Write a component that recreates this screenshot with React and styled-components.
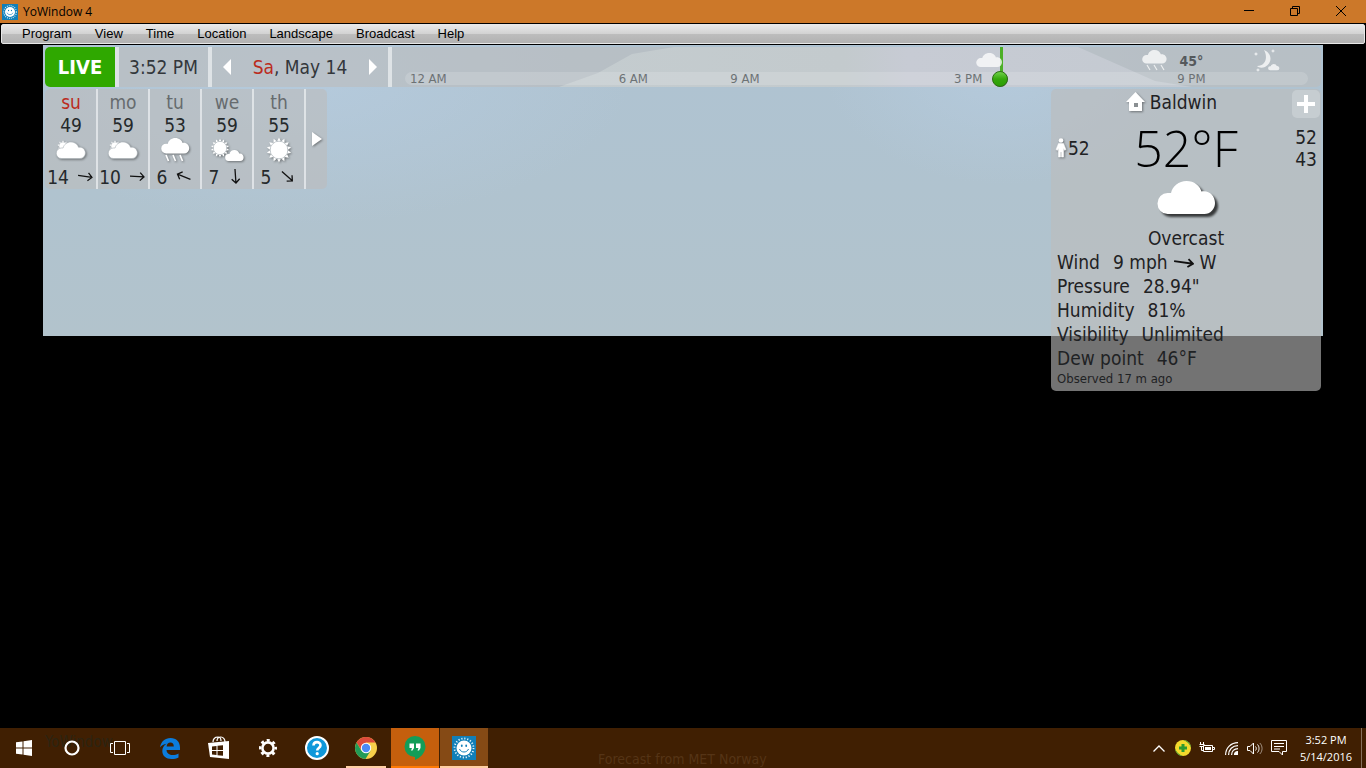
import React from "react";
import styled, { createGlobalStyle } from "styled-components";

const Global = createGlobalStyle`
  *, *::before, *::after { box-sizing: border-box; }
  body { margin: 0; background: #000; font-family: "DejaVu Sans Condensed", "DejaVu Sans", sans-serif; }
  button { font: inherit; color: inherit; background: none; border: 0; padding: 0; margin: 0; cursor: pointer; }
  svg { display: block; flex: none; }
  h1, p, dl, dd { margin: 0; font-weight: 400; }
`;

const uiFont = `"Open Sans", "Noto Sans", sans-serif`;
const glass = "rgba(188, 188, 188, 0.61)";
const divider = "rgba(235, 238, 240, 0.75)";

const Desktop = styled.div`
  display: flex;
  flex-direction: column;
  min-height: 100vh;
  background: #000;
`;

const TitleBar = styled.header`
  display: flex;
  align-items: center;
  height: 23px;
  padding: 0 2px;
  background: #cc7829;
  color: #000;
  font-family: ${uiFont};
`;

const Title = styled.h1`
  flex: 1;
  margin-left: 5px;
  font-size: 12px;
  line-height: 22px;
`;

const CaptionButton = styled.button`
  display: flex;
  align-items: center;
  justify-content: center;
  width: 46px;
  height: 21px;
  align-self: flex-start;
`;

const MenuBar = styled.nav`
  display: flex;
  align-items: center;
  gap: 23px;
  height: 20px;
  margin: 1px 1px 1px;
  padding: 0 20px 2px;
  border: 1px solid #e8e8e8;
  border-radius: 2px;
  background: linear-gradient(#e8e8e8, #d2d2d2 50%, #bdbdbd 51%, #b2b2b2);
  color: #000;
  font-family: "Liberation Sans", Arial, sans-serif;
  font-size: 13px;
`;

const Stage = styled.main`
  flex: 1;
  margin: 0 43px;
  padding: 2px 2px 40px;
  background:
    radial-gradient(ellipse 330px 150px at 260px 30px, rgba(183, 205, 225, 0.7), rgba(183, 205, 225, 0) 100%) 0 0 / 100% 291px no-repeat,
    radial-gradient(ellipse 180px 120px at 960px 20px, rgba(183, 205, 225, 0.7), rgba(183, 205, 225, 0) 100%) 0 0 / 100% 291px no-repeat,
    linear-gradient(#afc3d2, #b0c3cf 50%, #b2c3cc) 0 0 / 100% 291px no-repeat;
`;

const TopBar = styled.div`
  display: flex;
  height: 40px;
  border-radius: 5px;
  overflow: hidden;
  background: ${glass};
  color: #33373b;
  font-size: 19px;
`;

const LiveButton = styled.button`
  width: 70px;
  background: #2fa800;
  color: #fff;
  font-weight: 700;
  font-size: 20px;
`;

const TopCell = styled.div`
  display: flex;
  align-items: center;
  justify-content: ${(p) => (p.$spread ? "space-between" : "center")};
  width: ${(p) => p.$width}px;
  padding: ${(p) => (p.$spread ? "0 10px" : "0")};
  border-left: 4px solid ${divider};
`;

const Weekend = styled.span`
  color: #bb2c1e;
`;

const Timeline = styled.div`
  position: relative;
  flex: 1;
  border-left: 4px solid ${divider};
`;

const Daylight = styled.svg`
  position: absolute;
  inset: 0;
  width: 100%;
  height: 100%;
`;

const Track = styled.div`
  position: absolute;
  left: 13px;
  right: 13px;
  bottom: 2px;
  height: 13px;
  border-radius: 7px;
  background: rgba(255, 255, 255, 0.15);
`;

const Hours = styled.div`
  position: absolute;
  inset: 0 18px;
`;

const Mark = styled.div`
  position: absolute;
  top: ${(p) => p.$top}px;
  transform: ${(p) => (p.$start ? "none" : "translateX(-50%)")};
  color: ${(p) => (p.$strong ? "#55595c" : "#6d7275")};
  font-size: ${(p) => (p.$strong ? 14 : 13)}px;
  font-weight: ${(p) => (p.$strong ? 700 : 400)};
  line-height: 16px;
  white-space: nowrap;
`;

const Body = styled.div`
  display: flex;
  justify-content: space-between;
  align-items: flex-start;
  padding-top: 2px;
`;

const Forecast = styled.section`
  display: flex;
  height: 100px;
  padding-left: 1px;
  border-radius: 5px;
  background: ${glass};
  color: #25292b;
`;

const Day = styled.div`
  display: grid;
  grid-template-rows: 25px 22px 28px 25px;
  justify-items: center;
  align-items: center;
  width: 52px;
  border-right: 2px solid ${divider};
  font-size: 19px;
  line-height: 22px;
`;

const DayName = styled.span`
  color: ${(p) => (p.$weekend ? "#bb2c1e" : "#666b6e")};
`;

const WindLine = styled.span`
  display: flex;
  align-items: center;
  gap: 9px;
  padding-right: 2px;
`;

const NextButton = styled.button`
  display: flex;
  align-items: center;
  justify-content: center;
  width: 21px;
`;

const Shadowed = styled.svg`
  filter: drop-shadow(${(p) => p.$depth || 1}px ${(p) => p.$depth || 1}px 1px rgba(0, 0, 0, ${(p) => (p.$depth ? 0.7 : 0.4)}));
`;

const Details = styled.section`
  width: 270px;
  padding-bottom: 4px;
  border-radius: 5px;
  background: ${glass};
  color: #1f2224;
  font-size: 19px;
  line-height: 24px;
`;

const PlaceRow = styled.div`
  display: grid;
  grid-template-columns: 1fr 29px;
  height: 30px;
`;

const Place = styled.div`
  display: flex;
  justify-content: center;
  gap: 5px;
  padding-top: 1px;
`;

const AddButton = styled.button`
  display: flex;
  align-items: center;
  justify-content: center;
  width: 28px;
  height: 28px;
  margin-top: 1px;
  border-radius: 5px;
  background: rgba(255, 255, 255, 0.22);
`;

const TempRow = styled.div`
  display: grid;
  grid-template-columns: 60px 1fr 60px;
  align-items: center;
  height: 58px;
  padding: 0 4px;
`;

const FeelsLike = styled.div`
  display: flex;
  align-items: center;
`;

const Temperature = styled.div`
  color: #000;
  font-family: ${uiFont};
  font-size: 50px;
  font-weight: 300;
  line-height: 58px;
  text-align: center;
`;

const Range = styled.div`
  line-height: 22px;
  text-align: right;
`;

const Condition = styled.div`
  display: flex;
  flex-direction: column;
  align-items: center;
  gap: 12px;
  padding-top: 4px;
`;

const Readings = styled.dl`
  padding-left: 6px;
`;

const Reading = styled.div`
  display: flex;
  gap: 13px;
  dd { display: flex; align-items: center; gap: 6px; }
`;

const Observed = styled.p`
  padding-left: 6px;
  font-size: 13px;
  line-height: 17px;
`;

const TaskBar = styled.footer`
  position: relative;
  display: flex;
  height: 40px;
  background: #401f02;
  color: #fff;
`;

const Ghost = styled.span`
  position: absolute;
  top: ${(p) => p.$top}px;
  left: ${(p) => p.$left};
  color: ${(p) => p.$color};
  font-size: ${(p) => p.$size}px;
  line-height: 18px;
  white-space: nowrap;
  pointer-events: none;
`;

const Tasks = styled.div`
  display: flex;
  gap: ${(p) => p.$gap || 0}px;
  margin-right: 2px;
`;

const edge = { open: "#ffcfa3", alert: "#ff7a05", active: "#ffcfa3" };
const fill = { alert: "#c55f0d", active: "#854a15" };

const Task = styled.button`
  position: relative;
  display: flex;
  align-items: center;
  justify-content: center;
  width: 48px;
  height: 40px;
  background: ${(p) => fill[p.$state] || "transparent"};
  &::after {
    content: "";
    position: absolute;
    bottom: 0;
    left: ${(p) => (p.$state === "open" ? 4 : 0)}px;
    right: ${(p) => (p.$state === "open" ? 4 : 0)}px;
    height: 2px;
    background: ${(p) => edge[p.$state] || "transparent"};
  }
`;

const Tray = styled.div`
  display: flex;
  align-items: center;
  margin-left: auto;
  padding-right: 4px;
`;

const TrayButton = styled.button`
  display: flex;
  align-items: center;
  justify-content: center;
  width: 24px;
  height: 40px;
`;

const Clock = styled.button`
  width: 71px;
  height: 40px;
  border-right: 1px solid #85705c;
  font-family: ${uiFont};
  font-size: 11px;
  line-height: 17px;
  text-align: center;
`;

const CLOUD = "M11 33a10.500 10.500 0 0 1 0-21h3.500C16 5 22.500 0 30.500 0S44.500 5 46 10.500C54 9 60 15 60 22a11 11 0 0 1-11 11z";

function Cloud({ width, height, depth }) {
  return (
    <Shadowed $depth={depth} width={width} height={height} viewBox="0 0 60 33" preserveAspectRatio="none">
      <path d={CLOUD} fill="#fff" />
    </Shadowed>
  );
}

function SunShape({ cx, cy, r, spikes = 16 }) {
  const pts = [];
  for (let i = 0; i < spikes * 2; i++) {
    const a = (Math.PI * i) / spikes;
    const d = i % 2 ? r * 1.1 : r * 1.55;
    pts.push(`${cx + d * Math.sin(a)},${cy - d * Math.cos(a)}`);
  }
  return (
    <g>
      <polygon points={pts.join(" ")} fill="#fff" />
      <circle cx={cx} cy={cy} r={r * 1.1} fill="none" stroke="#a9b1b7" strokeWidth="0.7" />
      <circle cx={cx} cy={cy} r={r} fill="#fff" />
    </g>
  );
}

function WeatherIcon({ kind }) {
  if (kind === "mostly")
    return (
      <Shadowed width="30" height="20" viewBox="0 0 30 20">
        <SunShape cx={7} cy={6} r={3.6} spikes={9} />
        <path d={CLOUD} transform="translate(0 2) scale(.49 .5)" fill="#fff" stroke="#a9b1b7" strokeWidth="1.200" />
      </Shadowed>
    );
  if (kind === "rain")
    return (
      <Shadowed width="30" height="24" viewBox="0 0 30 24">
        <path d={CLOUD} transform="translate(1 0) scale(.47 .47)" fill="#fff" />
        <path d="M6 17l2.500 6M13 17l2.500 6M20 17l2.500 6" stroke="#fff" strokeWidth="1.600" />
      </Shadowed>
    );
  if (kind === "partly")
    return (
      <Shadowed width="34" height="24" viewBox="0 0 34 24">
        <SunShape cx={10} cy={10} r={6} spikes={14} />
        <path d={CLOUD} transform="translate(15 12) scale(.31 .33)" fill="#fff" />
      </Shadowed>
    );
  return (
    <Shadowed width="26" height="26" viewBox="0 0 26 26">
      <SunShape cx={13} cy={13} r={8} spikes={14} />
    </Shadowed>
  );
}

function WindArrow({ angle, large }) {
  return (
    <svg width={large ? 20 : 15} height="15" viewBox={large ? "0 0 20 15" : "0 0 15 15"}>
      <path
        d={large ? "M0 7.500H19M14 3.500l5 4-5 4" : "M0 7.500H14M10 3.500l4 4-4 4"}
        transform={large ? `rotate(${angle} 10 7.500)` : `rotate(${angle} 7.500 7.500)`}
        fill="none"
        stroke="#111"
        strokeWidth={large ? 1.8 : 1.3}
      />
    </svg>
  );
}

function Triangle({ left }) {
  return (
    <svg width="11" height="16" viewBox="0 0 11 16">
      <path d={left ? "M9 0v16L1 8z" : "M2 0v16l8-8z"} fill="#fff" />
    </svg>
  );
}

function AppIcon({ size }) {
  return (
    <svg width={size} height={size} viewBox="0 0 24 24">
      <rect width="24" height="24" fill="#117fb8" />
      <circle cx="12" cy="12" r="9.500" fill="none" stroke="#e4f3fb" strokeWidth="1.800" strokeDasharray="1.200 1.784" />
      <circle cx="12" cy="12" r="7.500" fill="#fff" />
      <ellipse cx="9.800" cy="9.800" rx="0.900" ry="1.200" fill="#117fb8" />
      <ellipse cx="14.200" cy="9.800" rx="0.900" ry="1.200" fill="#117fb8" />
      <path d="M7.500 13c1.500 4 7.500 4 9 0" fill="none" stroke="#117fb8" strokeWidth="1" />
    </svg>
  );
}

const menus = ["Program", "View", "Time", "Location", "Landscape", "Broadcast", "Help"];

const days = [
  { name: "su", temp: 49, icon: "mostly", wind: 14, angle: 8, weekend: true },
  { name: "mo", temp: 59, icon: "mostly", wind: 10, angle: 3 },
  { name: "tu", temp: 53, icon: "rain", wind: 6, angle: 202 },
  { name: "we", temp: 59, icon: "partly", wind: 7, angle: 86 },
  { name: "th", temp: 55, icon: "sun", wind: 5, angle: 42 },
];

const hourLabels = [
  { hour: 0, text: "12 AM" },
  { hour: 6, text: "6 AM" },
  { hour: 9, text: "9 AM" },
  { hour: 15, text: "3 PM" },
  { hour: 21, text: "9 PM" },
];

const at = (hour) => ({ left: `${(hour / 24) * 100}%` });

const readings = [
  ["Pressure", '28.94"'],
  ["Humidity", "81%"],
  ["Visibility", "Unlimited"],
  ["Dew point", "46°F"],
];

function TimelineStrip() {
  return (
    <Timeline>
      <Daylight viewBox="0 0 929 40" preserveAspectRatio="none">
        <defs>
          <linearGradient id="day" x1="0" x2="1" y1="0" y2="0">
            <stop offset="0" stopColor="#c4cccf" />
            <stop offset="0.45" stopColor="#c3cacd" />
            <stop offset="0.55" stopColor="#c7cbd4" />
            <stop offset="1" stopColor="#c4cad1" />
          </linearGradient>
        </defs>
        <path d="M167 40L206 26L240 7L282 0H686L763 34L800 40z" fill="url(#day)" />
      </Daylight>
      <Track />
      <Hours>
        {hourLabels.map((l) => (
          <Mark key={l.text} $top={24} $start={l.hour === 0} style={at(l.hour)}>{l.text}</Mark>
        ))}
        <Mark $top={0} style={at(15.87)}>
          <svg width="18" height="40" viewBox="0 0 18 40">
            <defs>
              <linearGradient id="knob" x1="0" x2="0" y1="0" y2="1">
                <stop offset="0" stopColor="#74d44e" />
                <stop offset="0.5" stopColor="#35a80c" />
                <stop offset="1" stopColor="#2c9c04" />
              </linearGradient>
            </defs>
            <path d="M9 0h3v26H9z" fill="#4caf26" />
            <circle cx="9.500" cy="32.500" r="7.500" fill="rgba(0,0,0,.35)" />
            <circle cx="9" cy="32" r="7.500" fill="url(#knob)" stroke="#2c6e14" />
          </svg>
        </Mark>
        <Mark $top={6} style={at(15.55)}>
          <svg width="26" height="14" viewBox="0 0 60 33" preserveAspectRatio="none">
            <path d={CLOUD} fill="#fff" opacity=".75" />
          </svg>
        </Mark>
        <Mark $top={3} style={at(20)}>
          <svg width="26" height="22" viewBox="0 0 26 22" opacity=".75">
            <path d={CLOUD} transform="translate(1 0) scale(.41 .41)" fill="#fff" />
            <path d="M6 15l3 5M13 15l3 5M20 15l3 5" stroke="#fff" strokeWidth="1.200" />
          </svg>
        </Mark>
        <Mark $strong $top={6} style={at(21)}>45°</Mark>
        <Mark $top={2} style={at(23.02)}>
          <svg width="26" height="24" viewBox="0 0 26 24" fill="#fff" opacity=".75">
            <path d="M10 1c8 3 9 13 1 17-3 1-6 1-8-1 9 0 11-9 7-16z" />
            <path d={CLOUD} transform="translate(14 15) scale(.19 .19)" />
            <path d="M2 3l.7 1.300 1.300.7-1.300.7L2 7l-.7-1.300L0 5l1.300-.7zM19 0l.6 1.200 1.400.8-1.400.7L19 4l-.6-1.300L17 2l1.400-.8zM4 19l.6 1.200 1.400.8-1.400.7L4 23l-.6-1.300L2 21l1.400-.8z" />
          </svg>
        </Mark>
      </Hours>
    </Timeline>
  );
}

export default function App() {
  return (
    <Desktop>
      <Global />
      <TitleBar>
        <AppIcon size={16} />
        <Title>YoWindow 4</Title>
        <CaptionButton aria-label="Minimize">
          <svg width="10" height="10" viewBox="0 0 10 10"><path d="M0 4.500h10" stroke="#000" /></svg>
        </CaptionButton>
        <CaptionButton aria-label="Restore">
          <svg width="10" height="10" viewBox="0 0 10 10"><path d="M.5 2.500h7v7h-7zM2.500 2V.5h7v7H8" fill="none" stroke="#000" /></svg>
        </CaptionButton>
        <CaptionButton aria-label="Close">
          <svg width="10" height="10" viewBox="0 0 10 10"><path d="M0 0l10 10M10 0L0 10" stroke="#000" /></svg>
        </CaptionButton>
      </TitleBar>
      <MenuBar>
        {menus.map((m) => <button key={m}>{m}</button>)}
      </MenuBar>

      <Stage>
        <TopBar>
          <LiveButton>LIVE</LiveButton>
          <TopCell $width={93}>3:52 PM</TopCell>
          <TopCell $width={180} $spread>
            <button aria-label="Previous day"><Triangle left /></button>
            <span><Weekend>Sa</Weekend>, May 14</span>
            <button aria-label="Next day"><Triangle /></button>
          </TopCell>
          <TimelineStrip />
        </TopBar>

        <Body>
          <Forecast>
            {days.map((d) => (
              <Day key={d.name}>
                <DayName $weekend={d.weekend}>{d.name}</DayName>
                <span>{d.temp}</span>
                <WeatherIcon kind={d.icon} />
                <WindLine>{d.wind}<WindArrow angle={d.angle} /></WindLine>
              </Day>
            ))}
            <NextButton aria-label="More days">
              <Shadowed width="12" height="15" viewBox="0 0 12 15"><path d="M1 0v14l10-7z" fill="#fff" /></Shadowed>
            </NextButton>
          </Forecast>

          <Details>
            <PlaceRow>
              <Place>
                <Shadowed width="19" height="22" viewBox="0 0 19 22">
                  <path d="M9.500 2L19 12h-3v9H3v-9H0z" fill="#fff" />
                  <path d="M8 13h4v4H8z" fill="#8a8f92" />
                </Shadowed>
                Baldwin
              </Place>
              <AddButton aria-label="Add location">
                <svg width="20" height="20" viewBox="0 0 20 20"><path d="M10 1v18M1 10h18" stroke="#fff" strokeWidth="4" /></svg>
              </AddButton>
            </PlaceRow>
            <TempRow>
              <FeelsLike>
                <Shadowed width="13" height="20" viewBox="0 0 13 20">
                  <circle cx="6" cy="2.500" r="2.300" fill="#fff" />
                  <path d="M3.500 5.500h5l2.500 6-1.500.8L8.500 10v9H6.500v-5h-1v5h-2v-9l-1 2.300L1 11.500z" fill="#fff" stroke="#fff" strokeWidth="0.500" />
                </Shadowed>
                52
              </FeelsLike>
              <Temperature>52°F</Temperature>
              <Range>52<br />43</Range>
            </TempRow>
            <Condition>
              <Cloud width={58} height={33} depth={3} />
              <span>Overcast</span>
            </Condition>
            <Readings>
              <Reading>
                <dt>Wind</dt>
                <dd>9 mph<WindArrow angle={8} large />W</dd>
              </Reading>
              {readings.map(([k, v]) => (
                <Reading key={k}><dt>{k}</dt><dd>{v}</dd></Reading>
              ))}
            </Readings>
            <Observed>Observed 17 m ago</Observed>
          </Details>
        </Body>
      </Stage>

      <TaskBar>
        <Ghost $size={15} $top={5} $left="45px" $color="#2c2412">YoWindow</Ghost>
        <Ghost $size={14} $top={22} $left="calc(50% - 85px)" $color="#553416">Forecast from MET Norway</Ghost>
        <Tasks>
          <Task aria-label="Start">
            <svg width="16" height="16" viewBox="0 0 16 16" fill="#fff"><path d="M0 2.300L6.500 1.400v6.100H0zM7.500 1.200L16 0v7.500H7.500zM0 8.500h6.500v6.100L0 13.700zM7.500 8.500H16V16l-8.500-1.200z" /></svg>
          </Task>
          <Task aria-label="Cortana">
            <svg width="16" height="16" viewBox="0 0 16 16"><circle cx="8" cy="8" r="6.500" fill="none" stroke="#fff" strokeWidth="2.200" /></svg>
          </Task>
          <Task aria-label="Task view">
            <svg width="20" height="14" viewBox="0 0 20 14" fill="none" stroke="#fff"><path d="M4.500.5h11v13h-11zM3 2.500H.5v9H3M17 2.500h2.500v9H17" /></svg>
          </Task>
        </Tasks>
        <Tasks $gap={1}>
          <Task aria-label="Edge">
            <svg width="20" height="21" viewBox="0 0 20 21"><path d="M0 9.500C1 3.500 5 0 10.500 0 16.500 0 20 4 20 9.500V12H6.500c.2 3.500 3 5 6 5 2.300 0 4.300-.6 6-1.600v4c-2 1.100-4.300 1.600-7 1.600C6 21 2.300 17.800 2.300 13c0-3.200 1.700-5.800 4.300-7.300C3.700 6 1.600 7.300 0 9.500zM6.600 8.500h7.200c0-2.400-1.200-3.900-3.400-3.900-2.100 0-3.500 1.500-3.800 3.900z" fill="#0c7cdb" /></svg>
          </Task>
          <Task aria-label="Store">
            <svg width="22" height="24" viewBox="0 0 22 24"><path d="M5 6C5 2 8 1 10 1s3 2 3 4M9 5c0-3 2-4 4-4s4 2 4 5" fill="none" stroke="#fff" strokeWidth="1.200" /><path d="M0 7l21-2v18L2 21z" fill="#fff" /><path d="M4 10.500l4.500-.5v4H4zM9.500 9.800l5.500-.6V14H9.500zM4 15h4.500v4L4 18.500zM9.500 15H15v4.800l-5.500-.6z" fill="#401f02" /></svg>
          </Task>
          <Task aria-label="Settings">
            <svg width="20" height="20" viewBox="0 0 20 20"><circle cx="10" cy="10" r="5.600" fill="none" stroke="#fff" strokeWidth="2.600" /><circle cx="10" cy="10" r="7.800" fill="none" stroke="#fff" strokeWidth="2.400" strokeDasharray="3.063 3.063" strokeDashoffset="1.530" /></svg>
          </Task>
          <Task aria-label="Help">
            <svg width="24" height="24" viewBox="0 0 24 24"><circle cx="12" cy="12" r="11" fill="#0f98da" stroke="#fff" strokeWidth="2" /><path d="M8.500 9.500C8.500 5 15.500 5 15.500 9.300c0 2.700-3.300 2.700-3.300 5.200" fill="none" stroke="#fff" strokeWidth="2.600" /><circle cx="12.200" cy="17.700" r="1.600" fill="#fff" /></svg>
          </Task>
          <Task $state="open" aria-label="Chrome">
            <svg width="22" height="22" viewBox="0 0 22 22"><circle cx="11" cy="11" r="11" fill="#f9d04a" /><path d="M1.500 5.500A11 11 0 0 1 20.500 5.500H11L6.500 13.500z" fill="#db4a3b" /><path d="M1.500 5.500A11 11 0 0 0 10.500 22L15.700 13.500 11 16 6.300 13.600z" fill="#229b57" /><circle cx="11" cy="11" r="5.200" fill="#fff" /><circle cx="11" cy="11" r="4.200" fill="#4a8af4" /></svg>
          </Task>
          <Task $state="alert" aria-label="Hangouts">
            <svg width="22" height="24" viewBox="0 0 22 24"><path d="M11 0a10.500 10.500 0 0 1 10.500 10.500C21.500 17 16 22 11 24v-3A10.500 10.500 0 0 1 11 0z" fill="#139d58" /><path d="M5.500 7.500h4.500v4.500l-1.500 2.500H7L8 12H5.500zM12 7.500h4.500v4.500L15 14.500h-1.500l1-2.500H12z" fill="#fff" /></svg>
          </Task>
          <Task $state="active" aria-label="YoWindow"><AppIcon size={24} /></Task>
        </Tasks>
        <Tray>
          <TrayButton aria-label="Show hidden icons">
            <svg width="12" height="7" viewBox="0 0 12 7"><path d="M.5 6.500L6 1l5.500 5.500" fill="none" stroke="#fff" strokeWidth="1.300" /></svg>
          </TrayButton>
          <TrayButton aria-label="Updates">
            <svg width="16" height="16" viewBox="0 0 16 16"><circle cx="8" cy="8" r="8" fill="#f3d92c" /><path d="M8 0A8 8 0 0 1 16 8C15 4 12 1.500 8 0zM8 16A8 8 0 0 1 0 8c1 4 4 6.500 8 8z" fill="#3f9c36" /><path d="M6.500 4h3v2.500H12v3H9.500V12h-3V9.500H4v-3h2.500z" fill="#2d9a2f" /></svg>
          </TrayButton>
          <TrayButton aria-label="Battery">
            <svg width="16" height="12" viewBox="0 0 16 12"><path d="M4.500 3.500h9v6h-9zM14 5.500h1.500v2H14M1.500 0v2M4.500 0v2M.5 2.500h5M.5 4.500h4M2.500 4v4.500h2" fill="none" stroke="#fff" /><path d="M6 5h6v3H6z" fill="#fff" /></svg>
          </TrayButton>
          <TrayButton aria-label="Wi-Fi">
            <svg width="13" height="13" viewBox="0 0 13 13" fill="none" stroke="#fff" strokeWidth="1.200"><path d="M.6 13C.6 6 6 .6 13 .6M3.600 13C3.600 7.500 7.500 3.600 13 3.600M6.600 13c0-4 2.400-6.400 6.400-6.400" /><path d="M9.500 13c0-2 1.500-3.500 3.500-3.500V13z" fill="#fff" /></svg>
          </TrayButton>
          <TrayButton aria-label="Volume">
            <svg width="16" height="13" viewBox="0 0 16 13" fill="none" stroke="#fff"><path d="M.5 4.500h2.500L6.500 1v11L3 8.500H.5zM8.500 4.500c1 1 1 3 0 4M10.500 2.500c2 2 2 6 0 8" /><path d="M12.800 1c3 3 3 8 0 11" opacity=".5" /></svg>
          </TrayButton>
          <TrayButton aria-label="Notifications">
            <svg width="16" height="16" viewBox="0 0 16 16" fill="none" stroke="#fff"><path d="M.5.500h15v11h-4v3.500l-3.500-3.500H.5zM3 3.500h10M3 6.500h10M3 9h6" /></svg>
          </TrayButton>
          <Clock>3:52 PM<br />5/14/2016</Clock>
        </Tray>
      </TaskBar>
    </Desktop>
  );
}
